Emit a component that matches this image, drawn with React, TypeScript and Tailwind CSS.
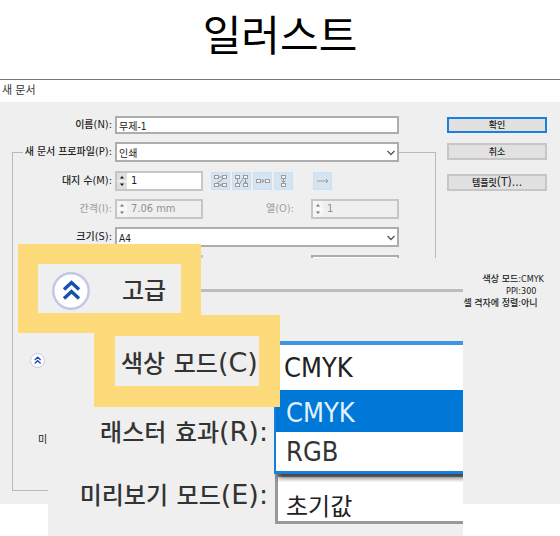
import React from 'react';
import type { ReactNode } from 'react';

const uiFont = "font-['DejaVu_Sans_Condensed','Noto_Sans_CJK_KR',sans-serif]";

function Label({ id, ko, latin, muted }: { id: string; ko: string; latin: string; muted?: boolean }) {
  return (
    <label
      htmlFor={id}
      className={`shrink-0 whitespace-nowrap text-right text-[10px] font-medium leading-5 ${muted ? 'text-[#a3a3a3]' : 'text-[#222]'}`}
    >
      {ko}
      <span className="text-[11px]">{latin}</span>
    </label>
  );
}

function Row({ label, children }: { label: ReactNode; children: ReactNode }) {
  return (
    <div className="flex h-5 items-center">
      <div className="flex w-[99px] shrink-0 justify-end">{label}</div>
      <div className="ml-[3px] flex min-w-0 flex-1 items-center">{children}</div>
    </div>
  );
}

function Select({ id, value }: { id: string; value: string }) {
  return (
    <div className="relative h-5 flex-1">
      <select
        id={id}
        defaultValue={value}
        className="block h-5 w-full appearance-none border-2 border-[#adadad] bg-white pt-1 pl-[2px] text-[10px] leading-3 text-[#222]"
      >
        <option>{value}</option>
      </select>
      <svg className="pointer-events-none absolute top-[7px] right-1 h-2 w-2" viewBox="0 0 8 8" fill="none" stroke="#555" strokeWidth="1.3">
        <path d="M0.5 2 4 5.5 7.5 2" />
      </svg>
    </div>
  );
}

function Spinner({ id, value, disabled }: { id: string; value: string; disabled?: boolean }) {
  const tone = disabled ? 'bg-[#efefef] text-[#8f8f8f]' : 'bg-white text-[#222]';
  return (
    <div className={`flex h-5 w-[88px] shrink-0 items-center border-2 border-[#c6c6ca] ${tone}`}>
      <svg
        className={`h-4 w-[10px] shrink-0 ${disabled ? 'bg-[#f5f5f5]' : 'bg-[#dedede]'}`}
        viewBox="0 0 10 16"
        fill={disabled ? '#777' : '#111'}
      >
        <path d="M3 5.5 5 3l2 2.5zM3 10.5l2 2.5 2-2.5z" />
        <path d="M0 8h10" stroke="#fff" strokeWidth="1" />
      </svg>
      <input id={id} defaultValue={value} disabled={disabled} className="w-full min-w-0 bg-transparent pl-1 text-[11px] leading-4" />
    </div>
  );
}

function ArrangeButton({ label, children }: { label: string; children: ReactNode }) {
  return (
    <button aria-label={label} className="h-[18px] w-[19px] shrink-0 border border-[#c8e1f4] bg-[#d5e4f0]">
      <svg className="block h-4 w-[17px]" viewBox="0 0 17 16" fill="none" stroke="#9a9a9a" strokeWidth="1">
        {children}
      </svg>
    </button>
  );
}

function Cells({ at }: { at: number[][] }) {
  return (
    <>
      {at.map(([x, y]) => (
        <rect key={`${x}-${y}`} x={x} y={y} width="4" height="3" fill="#f4f4f4" />
      ))}
    </>
  );
}

const corners = [[2.5, 2.5], [10.5, 2.5], [2.5, 10.5], [10.5, 10.5]];

function CollapseIcon({ className }: { className: string }) {
  return (
    <svg className={className} viewBox="0 0 38 38" fill="none">
      <circle cx="19" cy="19" r="17.7" fill="#fff" stroke="#c3c7e6" strokeWidth="2.5" />
      <path d="M12 17.5 19.5 10.5 27 17.5M12 26.5 19.5 19.5 27 26.5" stroke="#174fae" strokeWidth="3.4" />
    </svg>
  );
}

function BigLabel({ id, words, latin }: { id: string; words: string[]; latin: string }) {
  return (
    <label htmlFor={id} className="whitespace-nowrap font-['DejaVu_Sans','Noto_Sans_CJK_KR',sans-serif] text-[27px] font-medium text-[#333]">
      {words.map((word, i) => (
        <React.Fragment key={word}>
          {i > 0 && ' '}
          <span className="text-2xl">{word}</span>
        </React.Fragment>
      ))}
      {latin}
    </label>
  );
}

function DialogForm() {
  return (
    <div className="min-w-0 flex-1">
      <div className="flex h-[18px] items-center pr-[37px]">
        <div className="flex w-[112px] shrink-0 justify-end">
          <Label id="name" ko="이름" latin="(N):" />
        </div>
        <input
          id="name"
          defaultValue="무제-1"
          className="ml-[3px] h-[18px] min-w-0 flex-1 border-2 border-[#adadad] bg-white pl-[2px] text-[10px] text-[#222]"
        />
      </div>

      <fieldset className="mt-2 ml-3 min-w-0 border border-[#b9b9b9]">
        <legend className="ml-[10px] w-[calc(100%-46px)]">
          <div className="flex h-5 items-center">
            <div className="flex w-[89px] shrink-0 justify-end">
              <Label id="profile" ko="새 문서 프로파일" latin="(P):" />
            </div>
            <div className="ml-[3px] flex flex-1">
              <Select id="profile" value="인쇄" />
            </div>
          </div>
        </legend>

        <div className="flex flex-col gap-2 pt-[9px] pr-9">
          <Row label={<Label id="count" ko="대지 수" latin="(M):" />}>
            <Spinner id="count" value="1" />
            <div className="ml-2 flex gap-[2px]">
              <ArrangeButton label="행별 격자">
                <Cells at={corners} />
                <path d="M7 4h3M11 6 5 10M7 12h3M8 10.5 9.5 12 8 13.5" />
              </ArrangeButton>
              <ArrangeButton label="열별 격자">
                <Cells at={corners} />
                <path d="M4.5 6v4M6.5 11l4-6M12.5 6v4M11 8.5 12.5 10 14 8.5" />
              </ArrangeButton>
              <ArrangeButton label="행으로 정렬">
                <Cells at={[[2.5, 6.5], [11.5, 6.5]]} />
                <path d="M6.5 8h4M8 6l2 2-2 2" />
              </ArrangeButton>
              <ArrangeButton label="열로 정렬">
                <Cells at={[[6.5, 2.5], [6.5, 10.5]]} />
                <path d="M8.5 5.5v4M6.5 7.5l2 2 2-2" />
              </ArrangeButton>
            </div>
            <div className="ml-5 flex">
              <ArrangeButton label="오른쪽에서 왼쪽으로">
                <path d="M3 8h11M12 6l2 2-2 2" />
              </ArrangeButton>
            </div>
          </Row>
          <Row label={<Label id="gap" ko="간격" latin="(I):" muted />}>
            <Spinner id="gap" value="7.06 mm" disabled />
            <div className="flex flex-1 justify-end pr-[17px]">
              <Label id="columns" ko="열" latin="(O):" muted />
            </div>
            <Spinner id="columns" value="1" disabled />
          </Row>
          <Row label={<Label id="size" ko="크기" latin="(S):" />}>
            <Select id="size" value="A4" />
          </Row>
          <Row label={null}>
            <Spinner id="width" value="" />
            <div className="flex-1" />
            <div className="flex w-[88px] shrink-0">
              <Select id="unit" value="" />
            </div>
          </Row>
        </div>

        <div className="pt-[75px] pb-10 pl-[17px]">
          <button aria-label="고급 옵션" className="flex h-5 w-[15px] items-center">
            <CollapseIcon className="h-[15px] w-[15px]" />
          </button>
          <div className="mt-[60px] pl-2 text-[10px] leading-5 text-[#222]">미</div>
        </div>
      </fieldset>
    </div>
  );
}

function DialogActions() {
  const summary = [
    ['색상 모드:', 'CMYK'],
    ['PPI:', '300'],
    ['픽셀 격자에 정렬:', '아니'],
  ];
  return (
    <div className="flex w-[100px] shrink-0 flex-col text-[10px] font-medium text-[#222]">
      <button className="mt-px h-4 border-2 border-[#1a80d9] bg-[#e1e1e1] text-[9px] leading-3">확인</button>
      <button className="mt-[10px] h-[17px] border-2 border-[#c6c6c6] bg-[#e1e1e1] text-[9px] leading-3">취소</button>
      <button className="mt-[14px] h-[17px] border-2 border-[#c6c6c6] bg-[#e1e1e1] text-[9px] leading-3">
        템플릿<span className="text-xs leading-3">(T)...</span>
      </button>
      <dl className="mt-[82px] text-[9px] leading-3">
        {summary.map(([term, value]) => (
          <div key={term} className="flex">
            <dt className="flex w-[74px] shrink-0 justify-end whitespace-nowrap">{term}</dt>
            <dd className="whitespace-nowrap">{value}</dd>
          </div>
        ))}
      </dl>
    </div>
  );
}

function Magnified() {
  return (
    <section className="absolute top-[258px] right-[97px] bottom-0 left-12 bg-[#efefef]">
      <div className="pt-[31px]">
        <div className="h-[3px] bg-[#bdbdbd]" />
      </div>
      <div className="mt-[49px] grid grid-cols-[220px_1fr] grid-rows-[49px_84px_50px]">
        <div />
        <div className="pl-[6px]">
          <select
            id="big-mode"
            defaultValue="CMYK"
            className="block h-[49px] w-full appearance-none border-t-4 border-l-2 border-[#3f96df] bg-white pt-[2px] pl-2 text-[27px] text-[#222]"
          >
            <option>CMYK</option>
          </select>
        </div>

        <div className="flex items-center justify-end">
          <BigLabel id="big-raster" words={['래스터', '효과']} latin="(R):" />
        </div>
        <ul id="big-raster" role="listbox" className="z-10 ml-[6px] border-b-3 border-l-2 border-[#1a7fd8] bg-white text-[27px] shadow-[4px_4px_5px_rgba(0,0,0,0.6)] [clip-path:inset(0_0_-8px_0)]">
          <li role="option" aria-selected="true" className="h-[42px] bg-[#0078d7] pl-[10px] leading-[46px] text-[#e4f1ff]">
            CMYK
          </li>
          <li role="option" aria-selected="false" className="h-[39px] pl-[10px] leading-[39px] text-[#333]">
            RGB
          </li>
        </ul>

        <div className="flex items-center justify-end pb-2">
          <BigLabel id="big-preview" words={['미리보기', '모드']} latin="(E):" />
        </div>
        <div className="pl-[7px]">
          <select
            id="big-preview"
            defaultValue="초기값"
            className="block h-[50px] w-full appearance-none border-y-3 border-l-3 border-[#999] bg-white pt-4 pl-2 text-2xl leading-7 text-[#222]"
          >
            <option>초기값</option>
          </select>
        </div>
      </div>

      {/* Callouts around the two settings */}
      <div className="absolute -top-[14px] -left-[30px] flex h-[89px] w-[183px] items-center border-[20px] border-[#fedb7a] bg-[#efefef] pt-1 pl-[14px]">
        <CollapseIcon className="h-[38px] w-[38px] shrink-0" />
        <span className="ml-8 whitespace-nowrap text-2xl font-medium text-[#333]">고급</span>
      </div>
      <div className="absolute top-[57px] left-[46px] z-20 flex h-[92px] w-[186px] items-center border-[21px] border-[#fedb7a] bg-[#efefef] pt-1 pl-[6px]">
        <BigLabel id="big-mode" words={['색상', '모드']} latin="(C)" />
      </div>
    </section>
  );
}

export default function App() {
  return (
    <main className={`relative overflow-hidden bg-white pb-8 ${uiFont}`}>
      <h1 className="h-[79px] text-center font-['Noto_Sans_CJK_KR',sans-serif] text-[42px] leading-[66px] text-black">일러스트</h1>
      <div className="border-t border-[#777] bg-[#efefef]">
        <h2 className="h-[22px] bg-white pl-[2px] text-[11px] leading-[21px] text-[#333]">새 문서</h2>
        <div className="flex gap-[11px] pt-[14px] pr-[13px] pb-[13px]">
          <DialogForm />
          <DialogActions />
        </div>
      </div>
      <Magnified />
    </main>
  );
}
